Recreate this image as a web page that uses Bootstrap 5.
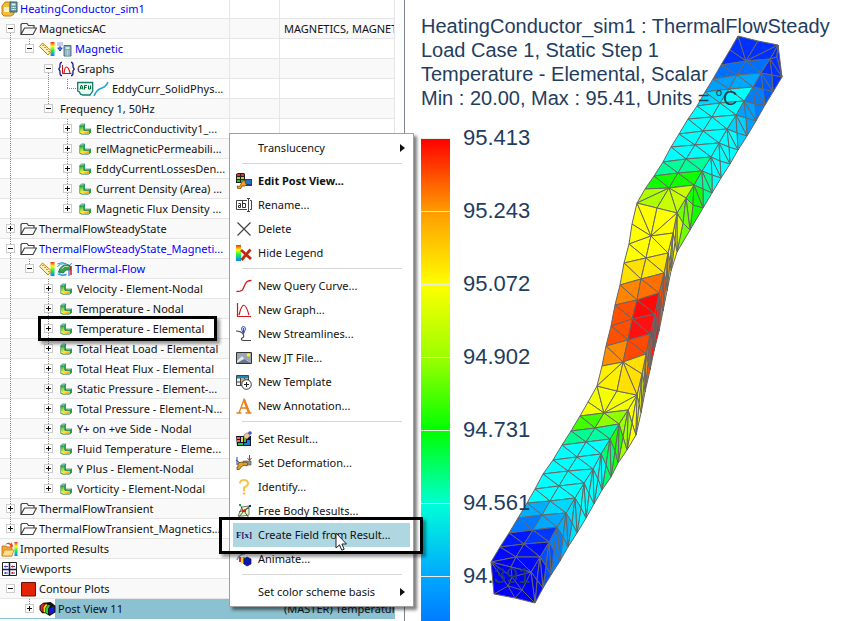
<!DOCTYPE html>
<html lang="en">
<head>
<meta charset="utf-8">
<meta name="viewport" content="width=device-width, initial-scale=1">
<title>Post processing - HeatingConductor_sim1</title>
<link href="https://cdn.jsdelivr.net/npm/bootstrap@5.3.0/dist/css/bootstrap.min.css" rel="stylesheet">
<style>
  body { font-family: "Noto Sans", "Open Sans", sans-serif; font-size: 11px; line-height: 18px; color: #111; background: #fff; }
  .navpane { flex: 0 0 405px; border-right: 1px solid #7d8690; padding-right: 9px; }
  .tree { table-layout: fixed; width: 100%; border-collapse: separate; border-spacing: 0; }
  .tree td { height: 20px; padding: 0; border-bottom: 1px solid #e6e6e6; border-right: 1px solid #e6e6e6; white-space: nowrap; overflow: hidden; }
  .tree tr:first-child td { height: 19px; }
  .tree tr:nth-child(even) td { background: #f9f9f9; }
  .tree .c-name { width: 230px; }
  .tree .c-state { width: 50px; }
  .tree td + td + td { padding-left: 4px; }
  .tree tr.picked td { background: #8bc1d0; border-color: #8bc1d0; }
  .tree tr.picked td:first-child { background: linear-gradient(90deg, #fff 55px, #8bc1d0 55px); }
  .node { height: 19px; padding-left: 1px; }
  .tree tr:first-child .node { height: 18px; }
  .node svg { flex: none; width: 17px; height: 16px; }
  .node svg.wide { width: 33px; }
  .node a { color: #00f; text-decoration: none; }
  .lbl { padding-left: 2px; }
  .gd { flex: none; width: 19px; height: 20px; display: flex; align-items: center; justify-content: center; }
  .gd.v, .gd.h, .gd.s { background: repeating-linear-gradient(#888 0 1px, transparent 1px 2px) 9px 0 / 1px 100% no-repeat; }
  .gd.h { background-size: 1px 50%; }
  .gd.s { background-size: 1px 50%; background-position: 9px 100%; }
  .gd.t::after { content: ""; width: 10px; height: 1px; margin-left: 9px; background: repeating-linear-gradient(90deg, #888 0 1px, transparent 1px 2px); }
  .tw { width: 9px; height: 9px; padding: 0; border: 1px solid #ccc; background: #fff linear-gradient(#111, #111) center / 5px 1px no-repeat; }
  .tw.p { background: linear-gradient(#111, #111) center / 5px 1px no-repeat, linear-gradient(#111, #111) center / 1px 5px no-repeat, #fff; }
  .view { flex: 1 1 0; min-width: 0; color: #1f3d60; font-family: "Liberation Sans", Arial, sans-serif; overflow: hidden; }
  .view p { font-size: 20px; line-height: 24px; padding: 14px 0 0 16px; white-space: nowrap; }
  .mesh { left: 0; top: 0; width: 437px; height: 621px; }
  .legend { padding: 28px 0 0 16px; font-size: 22px; line-height: 24px; }
  .step { height: 73px; }
  .swatch { width: 29px; border-top: 1px solid #e8efe0; }
  .step span { margin: -12px 0 0 13px; }
  .s1 { background: linear-gradient(#f00, #ff9c00); } .s2 { background: linear-gradient(#ff9c00, #ff0); }
  .s3 { background: linear-gradient(#ff0, #9cff00); } .s4 { background: linear-gradient(#9cff00, #0f0); }
  .s5 { background: linear-gradient(#0f0, #00ffd0); } .s6 { background: linear-gradient(#00ffd8, #00a8ff); }
  .s7 { background: linear-gradient(#00a8ff, #0060ff); }
  .popup { left: 229px; top: 133px; width: 185px; padding: 2px 3px; background: #fff; border: 1px solid #a0a0a0; border-radius: 0; box-shadow: 3px 3px 3px rgba(0,0,0,.5); z-index: 3; }
  .popup button { height: 24px; width: 100%; border: 0; background: none; padding: 0 0 0 3px; color: #111; text-align: left; }
  .popup button svg { flex: none; width: 16px; height: 16px; margin-right: 6px; }
  .popup button .noicon { width: 22px; }
  .popup button.hot { background: #afd7e1; }
  .popup .tri { margin-left: auto; margin-right: 5px; border: 4px solid transparent; border-left: 5px solid #111; border-right: 0; }
  .popup hr { margin: 3px 8px 5px 9px; border: 0; height: 1px; background: #d6d6d6; opacity: 1; }
  .frame { border: 3px solid #000; box-shadow: 3px 3px 3px rgba(0,0,0,.4); pointer-events: none; z-index: 4; }
  .f1 { left: 38px; top: 316px; width: 179px; height: 25px; }
  .f2 { left: 219px; top: 517px; width: 204px; height: 37px; }
  .arrow { left: 335px; top: 532px; z-index: 5; }
</style>
</head>
<body class="overflow-hidden">
<svg width="0" height="0" class="position-absolute" aria-hidden="true">
  <defs>
    <linearGradient id="rb" x2="0" y2="1"><stop offset="0" stop-color="#f22"/><stop offset=".3" stop-color="#ff0"/><stop offset=".6" stop-color="#2e5"/><stop offset="1" stop-color="#08f"/></linearGradient>
    <linearGradient id="rb2" x2=".6" y2="1"><stop offset="0" stop-color="#18a04c"/><stop offset=".45" stop-color="#a6e23e"/><stop offset=".7" stop-color="#ffe838"/><stop offset="1" stop-color="#f9a820"/></linearGradient>
  </defs>
  <symbol id="folder" viewBox="0 0 17 16"><path d="M1 13V3.500L2 2.500h5l1.500 2H14V7M1 13.500 4.500 7H16.500L13 13.500Z" fill="none" stroke="#444" stroke-width="1.200"/></symbol>
  <symbol id="res" viewBox="0 0 17 16"><path d="M2.500 5v7.500l2 1h7l2-1.500V8H8V3Z" fill="#15713a"/><path d="M3 5h3.500v4.500H12V13H5l-2-1Z" fill="url(#rb2)"/><path d="M2.500 4.800 4.500 3H8L6.500 5Z" fill="#8fdcc4" stroke="#15713a" stroke-width=".6"/><path d="M6.500 5 8 3v5L6.500 9.300Z" fill="#2a9c74"/><path d="M7 9.300 8.500 8H14l-2 1.500Z" fill="#8fdcc4" stroke="#15713a" stroke-width=".6"/><path d="M12 9.500 14 8v3.500L12 13Z" fill="#1ca04a"/></symbol>
  <symbol id="ruler" viewBox="0 0 16 16"><path d="M11 1h4v14h-4Z" fill="url(#rb)"/><path d="m3 2 9 8-3.500 4L0 5.500Z" fill="#ffeeb0" stroke="#c0851a"/><path d="m3 5 1-1M5 7l1-1M7 9l1-1M9 11l1-1" stroke="#a33" /></symbol>
  <symbol id="calc" viewBox="0 0 16 16"><path d="M1 2h6M1 4h6" stroke="#1237b5" stroke-dasharray="1 1"/><path d="M1 7h5M3.500 5v5M1.500 7l2 3 2-3" stroke="#1237b5" fill="none"/><path d="M7.500 4.500h7V15h-7Z" fill="#7fa9b5" stroke="#4d7480"/><path d="M9 6h4v2H9Z" fill="#cdf0d8"/><path d="M9 10h4M9 12h4M9 14h4" stroke="#e8f4f8" stroke-dasharray="1 .5"/></symbol>
  <symbol id="graphs" viewBox="0 0 17 16"><path d="M4 1.500H3Q2 2 2 4v2L.8 8 2 10v2q0 2 1 2.500h1M13 1.500h1q1 .5 1 2.500v2l1.200 2L15 10v2q0 2-1 2.500h-1" fill="none" stroke="#14148c" stroke-width="1.300"/><path d="M4.500 4v8.500h9" stroke="#c11" fill="none"/><path d="M6 12c1-8 4-8 6 0" stroke="#d11" fill="none" stroke-width="1.200"/></symbol>
  <symbol id="afu" viewBox="0 0 33 16"><path d="M.7 1.500h15v8.500L13 14H6q-3 0-3.500-3L.7 10Z" fill="#e9fbf3" stroke="#147c6c" stroke-width="1.300"/><path d="M17 15c2-5 4-7 8-8s5-4 6-6" fill="none" stroke="#20a8cc" stroke-width="1.500"/><path d="m3 8.500 1-4h1l1 4M3.500 7.200h2M7.500 8.500v-4H10M7.500 6.500h2M11.500 4.500V8h2V4.500" fill="none" stroke="#063"/></symbol>
  <symbol id="sim" viewBox="0 0 17 16"><path d="M1 5l3-4h6v3l3 3v6l-3 2H3l-2-2Z" fill="#f3bd37" stroke="#c07f10"/><path d="M3 6h5v5H3Z" fill="#fff3c0"/><path d="M9 1h7v10H9Z" fill="#6b9aa9" stroke="#355d6b"/><path d="M10.500 2.500h4v2h-4Z" fill="#d5f5d8"/><path d="M10.500 6.500h4M10.500 8.500h4" stroke="#fff" stroke-dasharray="1 .5"/></symbol>
  <symbol id="flow" viewBox="0 0 16 16"><path d="M1 3q5-3 9 0t5-1M1 6q2-4 8-3M1 13q5 3 9 0M2 11q2 4 8 3" stroke="#2893d8" fill="none"/><path d="M2 11Q4 3 12 4l2 1v4q-5-1-7 3Z" fill="#35a04c" stroke="#126a30" stroke-width=".8"/><path d="M5 8q3-4 7-2.500" stroke="#b4ecb4" fill="none"/><path d="M14.500 5v9" stroke="#b22" stroke-width="1.500"/><path d="M12.500 9v6" stroke="#24c"/></symbol>
  <symbol id="import" viewBox="0 0 17 16"><path d="M13.500 1H16.500v14h-3Z" fill="url(#rb)"/><path d="M1 5h4l1 1h5v9H1Z" fill="#f0a73a" stroke="#b46a12" stroke-width=".7"/><path d="m1 15 2.500-6H13L11 15Z" fill="#ffdf85" stroke="#c0801d" stroke-width=".7"/><path d="M4 4q3-4 6-1V1l2.500 4.500-4 .5 1-1.500Q7 2 4 4Z" fill="#e8441a"/></symbol>
  <symbol id="vports" viewBox="0 0 17 16"><path d="M1.500 1.500h14v13h-14Z" fill="#fff" stroke="#222"/><path d="M8.500 2v12M2 8.500h13" stroke="#15155a" stroke-width="1.500"/><path d="M3 5.500h4M10 5.500h4M3 12h4M10 12h4" stroke="#44b"/><path d="M4 5.500h1M11 5.500h1M4 12h1M11 12h1" stroke="#d22" stroke-width="2"/></symbol>
  <symbol id="contour" viewBox="0 0 17 16"><path d="M1.500 1.500h14v13.500h-14Z" fill="#e32400" stroke="#6a1400"/></symbol>
  <symbol id="post" viewBox="0 0 16 14"><path d="M.5 4 4 1l7-.5 4.500 3.500v6l-5.500 3.500-4-2.500H3L.5 8Z" fill="#111"/><path d="M1.500 4 4 2l1.500.5L3.500 5v4.500l-2-1.500Z" fill="#e22"/><path d="M4.200 5 6.500 2.300 8 3 6 6v4.500L4.200 9.500Z" fill="#fd0"/><path d="M6.600 6 8.500 3l2 .7-2 3v5l-1.900-1Z" fill="#2c4"/><path d="m9.500 6.500 5-2v5l-5 3Z" fill="#1020c8"/></symbol>
</svg>

<main class="d-flex min-vh-100 position-relative">
  <section class="navpane" aria-label="Post processing navigator">
    <table class="tree">
      <colgroup><col class="c-name"><col class="c-state"><col></colgroup>
      <tbody id="rows"></tbody>
    </table>
  </section>

  <section class="view position-relative" aria-label="Graphics view">
    <svg class="mesh position-absolute" id="mesh" viewBox="405 0 437 621" stroke="#666" stroke-width="1" stroke-linejoin="round" role="img" aria-label="Temperature mesh"></svg>
    <p class="mb-0 position-relative">HeatingConductor_sim1 : ThermalFlowSteady<br>Load Case 1, Static Step 1<br>Temperature - Elemental, Scalar<br>Min : 20.00, Max : 95.41, Units = °C</p>
    <div class="legend position-relative">
      <div class="step d-flex"><div class="swatch s1"></div><span>95.413</span></div>
      <div class="step d-flex"><div class="swatch s2"></div><span>95.243</span></div>
      <div class="step d-flex"><div class="swatch s3"></div><span>95.072</span></div>
      <div class="step d-flex"><div class="swatch s4"></div><span>94.902</span></div>
      <div class="step d-flex"><div class="swatch s5"></div><span>94.731</span></div>
      <div class="step d-flex"><div class="swatch s6"></div><span>94.561</span></div>
      <div class="step d-flex"><div class="swatch s7"></div><span>94.391</span></div>
    </div>
  </section>

  <div class="popup position-absolute" role="menu">
    <button type="button" class="d-flex align-items-center"><span class="noicon"></span>Translucency<span class="tri"></span></button>
    <hr>
    <button type="button" class="d-flex align-items-center fw-bold"><svg viewBox="0 0 16 16"><path d="M0 1l2-1h6l1 1v9H0Z" fill="#222"/><path d="M1 1h3v2H1ZM5 1h3v2H5Z" fill="#d32"/><path d="M1 4h3v2H1ZM5 4h3v2H5Z" fill="#cc2"/><path d="M1 7h3v2H1ZM5 7h3v2H5Z" fill="#2b4"/><path d="M9 6h7v7H9Z" fill="#123d9c"/><path d="M10 8h5M10 10h5" stroke="#3ad"/><path d="M1 13q3 2 4-2 1-4 5-3l-1 2 2 1q-2 3-5 2-1 4-4 3Z" fill="#f0a02c" stroke="#7a4708" stroke-width=".8"/></svg>Edit Post View...</button>
    <button type="button" class="d-flex align-items-center"><svg viewBox="0 0 16 16"><path d="M11 3.500H.5v9H11M14 3.500h1.500v9H14M12.500 1.500v13M11 1.500h3M11 14.500h3" fill="none" stroke="#444"/><path d="M2.500 6.500h2v4h-2v-2h2M6.500 4v6.500h3v-4h-3" fill="none" stroke="#333"/></svg>Rename...</button>
    <button type="button" class="d-flex align-items-center"><svg viewBox="0 0 16 16"><path d="m1.500 1.500 13 13M14.500 1.500l-13 13" stroke="#444" stroke-width="1.200"/></svg>Delete</button>
    <button type="button" class="d-flex align-items-center"><svg viewBox="0 0 16 16"><path d="M0 0h5v16H0Z" fill="url(#rb)"/><path d="m5 5 10 9M14.500 4.500 5.500 15" stroke="#c32812" stroke-width="2.800"/></svg>Hide Legend</button>
    <hr>
    <button type="button" class="d-flex align-items-center"><svg viewBox="0 0 16 16"><path d="M.5 13.500c7 0 6-2 8-6s3-5 7-5" fill="none" stroke="#d01818" stroke-width="1.300"/></svg>New Query Curve...</button>
    <button type="button" class="d-flex align-items-center"><svg viewBox="0 0 16 16"><path d="M1.500 1v13.500H15M3 13C6 1 9-1 13 13" fill="none" stroke="#d01818" stroke-width="1.200"/></svg>New Graph...</button>
    <button type="button" class="d-flex align-items-center"><svg viewBox="0 0 16 16"><path d="M0 5q5 0 7 3t-1 4q-2 2 2 2.500h7" fill="none" stroke="#444" stroke-width="1.100"/><path d="M7.500 8 5.500 3q0-2.500 2-2.500t2 2.500Z" fill="#dde3ff" stroke="#4554b8"/><path d="M7.500 2v5" stroke="#c22"/></svg>New Streamlines...</button>
    <button type="button" class="d-flex align-items-center"><svg viewBox="0 0 16 16"><path d="M.5 2.500h15v11H.5Z" fill="#9ba6b2" stroke="#333"/><circle cx="12.500" cy="5" r="1.800" fill="#fe3"/><path d="m1 11 5-5 4 5 1-1 4 3H1Z" fill="#e2e9f0"/><path d="m1 13 7-4 7 4" fill="#6a7686"/></svg>New JT File...</button>
    <button type="button" class="d-flex align-items-center"><svg viewBox="0 0 16 16"><path d="M.5 1.500h12v10H.5Z" fill="#eef4f8" stroke="#444"/><path d="M1 2h11v2.500H1Z" fill="#2387ad"/><path d="M4.500 4v7M8.500 4v5M1 8h8" stroke="#444"/><path d="M5 5h7v3H5Z" fill="#f3a04c"/><circle cx="10.500" cy="10.500" r="4.800" fill="#fff" stroke="#333"/><path d="M8 10.500h5M10.500 8v5" stroke="#222"/></svg>New Template</button>
    <button type="button" class="d-flex align-items-center"><svg viewBox="0 0 16 16"><path d="M.5 15h5M9.500 15h6M3 15 8 1.500 13 15M5 10h6" fill="none" stroke="#ec8018" stroke-width="1.300"/><path d="m8 1.500 5 13" stroke="#ec8018" stroke-width="2.400"/></svg>New Annotation...</button>
    <hr>
    <button type="button" class="d-flex align-items-center"><svg viewBox="0 0 16 16"><path d="M0 5h15v10H1Z" fill="#113"/><path d="M1 6h3v2H1ZM1 9h3v2H1Z" fill="#f63"/><path d="M5 6h2v5H5Z" fill="#fc2"/><path d="M8 7h2v4H8ZM2 12h5v2H2Z" fill="#2c4"/><path d="M11 9h3v5H8v-2h3Z" fill="#18c"/><path d="M8 4q3-3 5-2l1 3-3 3-3-1Z" fill="#e9c79c" stroke="#86683d" stroke-width=".6"/><circle cx="14" cy="2" r="1.800" fill="#45c"/></svg>Set Result...</button>
    <button type="button" class="d-flex align-items-center"><svg viewBox="0 0 16 16"><path d="M1 2v8M0 5l4 3" stroke="#24a" fill="none"/><path d="M7 6h8v4H7Z" fill="#8a9a98" stroke="#444" stroke-width=".6"/><path d="M1 14.500q3 1 4-2.500l3-2 3 1 1-3-3-1-2 1-1-1-4 1v4H1Z" fill="#e9a029" stroke="#704808" stroke-width=".8"/><path d="M13.500 0v5M11.500 3l2 2.500 2-2.500" stroke="#d22" fill="none"/></svg>Set Deformation...</button>
    <button type="button" class="d-flex align-items-center"><svg viewBox="0 0 16 16"><path d="M4 4.500Q4 1 8 1t4 3.500Q12 7 8 8.500V12" fill="none" stroke="#fac24e" stroke-width="2"/><circle cx="8" cy="14.500" r="1.300" fill="#fac24e"/></svg>Identify...</button>
    <button type="button" class="d-flex align-items-center"><svg viewBox="0 0 16 16"><path d="m2 13 4-9 7-1v9l-6 1Z" fill="#f2f4c8" stroke="#555" stroke-width=".8"/><path d="M3 9l10-4M7 8 4 1M8 8l7-6M8 8 2 15M8 8l5 7" stroke="#363" fill="none"/><path d="M3 2h2" stroke="#2a3" stroke-width="2"/><path d="M13 3h2" stroke="#22b" stroke-width="2"/><path d="M6 8h4" stroke="#d22" stroke-width="2"/></svg>Free Body Results...</button>
    <button type="button" class="hot d-flex align-items-center"><svg viewBox="0 0 16 16"><text x="0" y="11" font-size="9" font-weight="bold" font-family="Liberation Serif" fill="#1c1464">F[x]</text></svg>Create Field from Result...</button>
    <button type="button" class="d-flex align-items-center"><svg viewBox="0 0 16 16"><path d="M1 9q2-6 8-6" stroke="#8a93a6" fill="none" stroke-width="1.500"/><path d="M3 6h3v5H3Z" fill="#e22"/><path d="M5 6h2v6H5Z" fill="#fd2"/><path d="M7 6h2v7H7Z" fill="#2c5"/><path d="m8 8 3-2 4 2v5l-4 2-3-2Z" fill="#0b16b8" stroke="#114" stroke-width=".7"/></svg>Animate...</button>
    <hr>
    <button type="button" class="d-flex align-items-center"><span class="noicon"></span>Set color scheme basis<span class="tri"></span></button>
  </div>
  <div class="frame f1 position-absolute"></div>
  <div class="frame f2 position-absolute"></div>
  <svg class="arrow position-absolute" width="13" height="20" viewBox="0 0 13 20"><path d="M1 1v15l3.500-3.200 2.300 5.400 2.400-1-2.300-5.200H11.500Z" fill="#fff" stroke="#222"/></svg>
</main>

<script src="https://cdn.jsdelivr.net/npm/bootstrap@5.3.0/dist/js/bootstrap.bundle.min.js"></script>
<script>
// Tree rows: [guide cells, icons, label, is link, third column]
// guides: "-"/"+" expander, "|" line, "L" elbow, "." blank; "^" marks a line above the expander, "!" a full line, "v" a line below
const rows = [
  ["", ["sim"], "HeatingConductor_sim1", 1],
  ["-v", ["folder"], "MagneticsAC", 0, "MAGNETICS, MAGNETICS"],
  ["| -^", ["ruler", "calc"], "Magnetic", 1],
  ["| . -v", ["graphs"], "Graphs"],
  ["| . | L", ["afu"], "EddyCurr_SolidPhys..."],
  ["| . -^", [], "Frequency 1, 50Hz"],
  ["| . . +!", ["res"], "ElectricConductivity1_..."],
  ["| . . +!", ["res"], "relMagneticPermeabili..."],
  ["| . . +!", ["res"], "EddyCurrentLossesDen..."],
  ["| . . +!", ["res"], "Current Density (Area) ..."],
  ["| . . +^", ["res"], "Magnetic Flux Density ..."],
  ["+!", ["folder"], "ThermalFlowSteadyState"],
  ["-!", ["folder"], "ThermalFlowSteadyState_Magneti...", 1],
  ["| -^", ["ruler", "flow"], "Thermal-Flow", 1],
  ...["Velocity - Element-Nodal", "Temperature - Nodal", "Temperature - Elemental", "Total Heat Load - Elemental", "Total Heat Flux - Elemental", "Static Pressure - Element-...", "Total Pressure - Element-N...", "Y+ on +ve Side - Nodal", "Fluid Temperature - Eleme...", "Y Plus - Element-Nodal"].map(t => ["| . +!", ["res"], t]),
  ["| . +^", ["res"], "Vorticity - Element-Nodal"],
  ["+!", ["folder"], "ThermalFlowTransient"],
  ["+^", ["folder"], "ThermalFlowTransient_Magnetics..."],
  ["", ["import"], "Imported Results"],
  ["", ["vports"], "Viewports"],
  ["-", ["contour"], "Contour Plots"],
  [". +^", ["post"], "Post View 11", 0, "(MASTER) Temperature"]
];
const lineClass = { "^": "h", "!": "v", "v": "s" };
const guide = (g, name) => {
  if (g === ".") return '<span class="gd"></span>';
  if (g === "|") return '<span class="gd v"></span>';
  if (g === "L") return '<span class="gd h t"></span>';
  return `<span class="gd ${lineClass[g[1]] || ""}"><button type="button" class="tw ${g[0] === "+" ? "p" : ""}" aria-label="Toggle ${name}"></button></span>`;
};
document.getElementById("rows").innerHTML = rows.map(([g, icons, name, link, info], i) => {
  const cells = g ? g.split(" ").map(x => guide(x, name)).join("") : "";
  const pics = icons.map(k => `<svg class="${k === "afu" ? "wide" : ""}"><use href="#${k}"/></svg>`).join("");
  return `<tr class="${i === rows.length - 1 ? "picked" : ""}"><td><div class="node d-flex align-items-center">${cells}${pics}<span class="lbl">${link ? `<a href="#">${name}</a>` : name}</span></div></td><td></td><td>${info || ""}</td></tr>`;
}).join("");

// Conductor mesh: three bars, each given by its left, middle, ridge and outer edge.
// Band k runs L[k+2] - M[k] - R[k+1].
let out = "";
const tri = (c, ...p) => { out += `<polygon fill="${c}" points="${p.map(q => q.join()).join(" ")}"/>`; };
const avg = (...p) => [0, 1].map(i => Math.round(p.reduce((s, q) => s + q[i], 0) / p.length));
const pts = s => s.split(" ").map(q => q.split(",").map(Number));
const pick = (a, i) => a[Math.max(0, Math.min(i, a.length - 1))];
function bar(L, M, R, O, front, right, side) {
  for (let k = 0; k < R.length - 1; k++) {
    const c = pick(side, k), c2 = pick(side, k + 1), S = avg(R[k], R[k + 1], O[k], O[k + 1]);
    tri(c, R[k], R[k + 1], S); tri(c, R[k], S, O[k]); tri(c, S, O[k], O[k + 1]); tri(c2, R[k + 1], S, O[k + 1]);
  }
  const top = avg(L[0], R[0]);
  tri(front[0], L[0], M[0], L[1]); tri(front[0], L[1], M[0], L[2]);
  tri(right[0], L[0], top, M[0]); tri(right[0], top, R[0], M[0]); tri(right[0], R[0], M[0], R[1]);
  for (let k = 0; k < M.length - 1; k++) {
    const a = pick(front, k + 1), b = pick(right, k + 1);
    tri(a, L[k + 2], M[k], M[k + 1]); tri(a, L[k + 2], L[k + 3], M[k + 1]);
    tri(b, M[k], R[k + 1], R[k + 2]); tri(b, M[k], M[k + 1], R[k + 2]);
  }
  const z = M.length - 1, m = M[z], a = pick(front, z + 1), b = pick(right, z + 1);
  const l = L[L.length - 1], r = R[R.length - 1], e = avg(l, r);
  for (let i = z + 2; i < L.length - 1; i++) tri(a, L[i], L[i + 1], m);
  for (let i = z + 1; i < R.length - 1; i++) tri(b, R[i], R[i + 1], m);
  tri(a, l, e, m); tri(b, e, r, m);
}
bar(pts("738,36 730,50 721,65 713,79 705,92 697,106 688,119 679,134 671,147 663,162 654,176 645,189 637,203"),
    pts("746,61 737,75 729,89 720,103 712,117 703,131 695,145 686,159 678,173 669,188"),
    pts("778,45 770,59 761,73 753,87 744,101 736,115 727,129 719,143 711,157 702,171 694,185 686,198 677,213"),
    pts("778,45 782,77 773,92 765,105 756,121 747,136 738,150 730,164 721,178 712,193 703,208 690,230 677,252"),
    ["#0030ff", "#0070ff", "#00a0ff", "#00d8ff", "#0ff", "#0ff", "#0ff", "#0ff", "#00ff98", "#10ff00", "#b0ff00"],
    ["#0030ff", "#0070ff", "#00a8ff", "#0ff", "#0ff", "#0ff", "#0ff", "#0ff", "#00ff98", "#10ff00", "#c8ff00"],
    ["#0028ff", "#0030ff", "#0058ff", "#0080ff", "#00a0ff", "#00d0ff", "#0ff", "#0ff", "#0ff", "#00ff90", "#10ff00", "#70ff00", "#d8ff00"]);
bar(pts("597,386 588,402 580,416 571,431 562,445 553,460 543,474 535,489 527,503 518,518 509,533 500,547 491,562"),
    pts("604,413 595,428 586,442 577,457 568,471 559,486 550,501 542,515 533,530 524,544 516,557"),
    pts("637,395 628,410 619,424 610,439 601,454 593,469 584,483 575,498 566,513 557,527 549,542 540,557 531,572"),
    pts("636,435 627,450 618,463 611,477 602,490 594,504 586,518 577,533 568,547 560,561 551,575 543,588 535,603"),
    ["#f4ff00", "#40ff00", "#00ff90", "#0ff", "#0ff", "#0ff", "#0ff", "#00b0ff", "#0078ff", "#0018ff", "#0008ff", "#0000f8"],
    ["#f4ff00", "#90ff00", "#00ffa0", "#0ff", "#0ff", "#0ff", "#0ff", "#00d8ff", "#00a8ff", "#0038ff", "#0010ff", "#0008ff"],
    ["#ff0", "#a0ff00", "#20ff00", "#00ff70", "#0ff", "#0ff", "#0ff", "#00e0ff", "#00b0ff", "#0080ff", "#0050ff", "#0010ff", "#0000f8"]);
bar(pts("637,203 632,224 629,244 624,263 620,285 615,305 611,326 606,346 602,366 597,386"),
    pts("651,236 646,258 641,279 637,300 632,319 628,340 623,362"),
    pts("677,213 673,233 668,253 664,273 659,293 655,314 650,334 646,354 642,374 637,395"),
    pts("677,252 671,271 667,291 663,311 659,331 654,351 650,370 645,392 641,413 636,435"),
    ["#ff0", "#ff0", "#ffe000", "#ff8400", "#ff5000", "#ff5000", "#ff8c00", "#fff000"],
    ["#ff0", "#ff0", "#ffe800", "#ff7000", "#ff0808", "#ff1010", "#ff4800", "#ffe000"],
    ["#ff0", "#ff0", "#ffb000", "#ff5000", "#ff1010", "#ff1818", "#ff5000", "#ffb000", "#f4ff00"]);
// End cap
const cap = pts("491,562 511,567 531,572 535,603 515,598 494,594"), inner = pts("512,577 508,586 522,590");
tri("#0000f8", ...cap);
for (const [a, b] of [[0, 0], [1, 0], [2, 0], [0, 1], [5, 1], [4, 1], [2, 2], [3, 2], [4, 2]]) out += `<path d="M${cap[a]}L${inner[b]}"/>`;
out += `<path fill="none" d="M${inner[0]}L${inner[1]}L${inner[2]}Z"/>`;
document.getElementById("mesh").innerHTML = out;
</script>
</body>
</html>
